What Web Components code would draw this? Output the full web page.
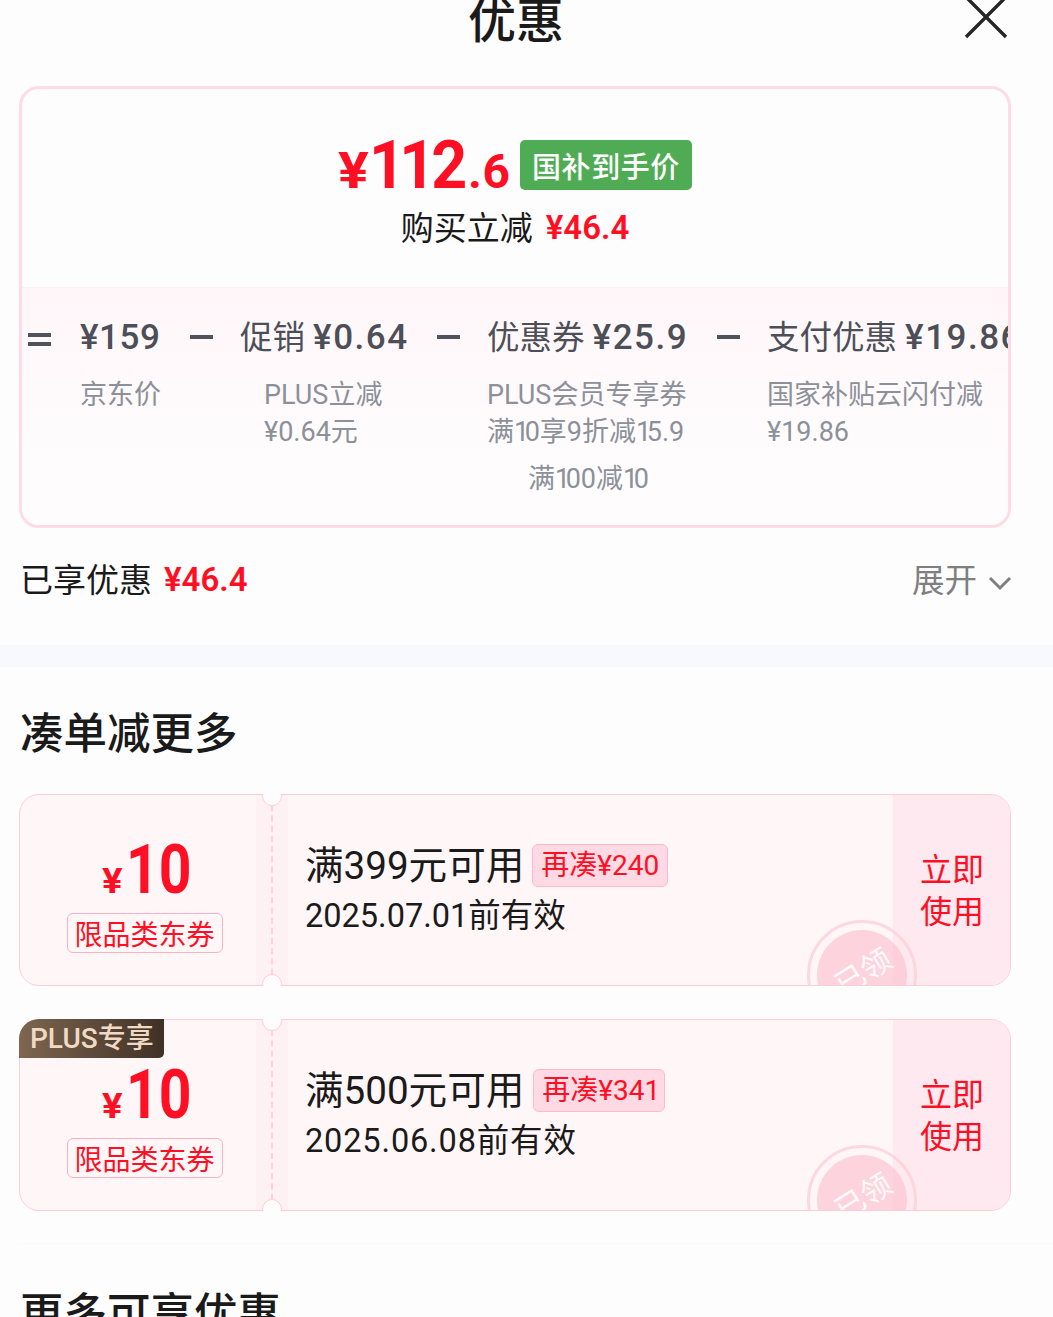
<!DOCTYPE html>
<html lang="zh"><head><meta charset="utf-8">
<style>
html,body{margin:0;padding:0;background:#fdfdfd;height:1317px;overflow:hidden}
body{font-family:"Noto Sans CJK SC",sans-serif;color:#1a1a1a;font-variant-numeric:proportional-nums}
</style></head>
<body>
<promo-sheet>
  <sheet-header>优惠</sheet-header>
  <price-card></price-card>
  <saved-row></saved-row>
  <section-band></section-band>
  <section-title>凑单减更多</section-title>
  <coupon-list>
    <coupon-ticket limit="满399元可用" gap="再凑¥240" date="2025.07.01前有效"></coupon-ticket>
    <coupon-ticket plus limit="满500元可用" gap="再凑¥341" date="2025.06.08前有效"></coupon-ticket>
  </coupon-list>
  <section-title class="more">更多可享优惠</section-title>
</promo-sheet>
<script>
const NUM='Roboto,"Noto Sans CJK SC",sans-serif';
const one='<span style="letter-spacing:-4.5px">1</span>';
function def(name,html){
  customElements.define(name,class extends HTMLElement{
    connectedCallback(){
      if(this.shadowRoot)return;
      const r=this.attachShadow({mode:'open'});
      r.innerHTML=typeof html==='function'?html(this):html;
    }
  });
}
def('promo-sheet',`<style>:host{display:block;width:1053px;height:1317px;overflow:hidden}</style><slot></slot>`);
def('sheet-header',`<style>
:host{display:block;position:relative;height:86px}
.t{display:block;text-align:center;font-size:48px;font-weight:500;line-height:48px;padding-right:21px;color:#1a1a1a;transform:translateY(-7px)}
svg{position:absolute;left:964px;top:-3px}
</style><span class="t"><slot></slot></span>
<svg width="44" height="42" viewBox="0 0 44 42" fill="none" stroke="#262626" stroke-width="3.4"><path d="M2 40 41 1M3 1l39 39"/></svg>`);
def('price-card',`<style>
:host{display:block;margin-left:19px;width:992px;height:442px;box-sizing:border-box;border:3px solid #ffdbe5;border-radius:20px;overflow:hidden;background:#fdfdfd}
.top{height:198px;display:flex;flex-direction:column;align-items:center;box-sizing:border-box;padding-top:50px}
.price{display:flex;align-items:flex-end;height:54px;color:#ff0f23;font-family:${NUM};font-weight:700;line-height:1}
.yen{font:700 50px/46px ${NUM};width:33px;margin-bottom:-1px;transform:scaleX(1.15);transform-origin:left}
.big{font-size:66px;line-height:54px;width:97px;transform:scaleX(.95);transform-origin:left;white-space:nowrap}
.dec{font-size:48px;line-height:44px;margin-bottom:-1px}
.tag{display:inline-flex;align-items:center;justify-content:center;width:172px;height:50px;background:#4fac55;color:#fff;border-radius:5px;font:500 29px/50px "Noto Sans CJK SC",sans-serif;margin-left:10px;margin-bottom:3px;letter-spacing:.6px}
.sub{margin-top:13px;font-size:33px;line-height:40px;display:flex;gap:13px;color:#1a1a1a}
.sub b{color:#ff0f23;font:600 33px/40px ${NUM};margin-top:2px}
.low{position:relative;height:238px;border-top:1px solid #fdeef3;background:linear-gradient(#fff6f9,#fefcfd 70%);box-sizing:border-box;display:grid;grid-template-columns:28px 24px 110px 50px 197px 50px 230px 50px auto;padding-left:6px;white-space:nowrap;overflow:hidden}
.tri{position:absolute;left:479px;top:-21px;width:28px;height:21px}
.op{padding-top:28px}
.c{padding-top:28px}
.h{font:400 32.5px/44px ${NUM};color:#4c4f57}
.h span{font:500 35px/44px ${NUM};letter-spacing:1.5px}
.h span.s{letter-spacing:.5px}
.d{color:#8c9099;font:400 27px/37px ${NUM};margin-top:17px}
.x{margin-top:10px}
</style>
<div class="top">
  <div class="price"><span class="yen">¥</span><span class="big">112</span><span class="dec">.6</span><span class="tag">国补到手价</span></div>
  <div class="sub"><span>购买立减</span><b>¥46.4</b></div>
</div>
<div class="low">
  <svg class="tri" viewBox="0 0 28 21" style="overflow:visible"><path d="M0 21 14 1l14 20" fill="#fbf4f6" stroke="#ffe3ea" stroke-width="2"/></svg>
  <div class="op"><svg width="23" height="44" viewBox="0 0 23 44"><path d="M0 17h23v4H0zM0 26h23v4H0z" fill="#50535b"/></svg></div><div></div>
  <div class="c"><div class="h"><span class="s">¥159</span></div><div class="d">京东价</div></div>
  <div class="op"><svg width="23" height="44" viewBox="0 0 23 44"><path d="M0 19h23v4H0z" fill="#50535b"/></svg></div>
  <div class="c"><div class="h">促销 <span>¥0.64</span></div><div class="d" style="padding-left:24px">PLUS立减<br>¥0.64元</div></div>
  <div class="op"><svg width="23" height="44" viewBox="0 0 23 44"><path d="M0 19h23v4H0z" fill="#50535b"/></svg></div>
  <div class="c"><div class="h">优惠券 <span>¥25.9</span></div><div class="d">PLUS会员专享券<br>满${one}0享9折减${one}5.9<div class="x" style="padding-left:41px">满${one}00减${one}0</div></div></div>
  <div class="op"><svg width="23" height="44" viewBox="0 0 23 44"><path d="M0 19h23v4H0z" fill="#50535b"/></svg></div>
  <div class="c"><div class="h">支付优惠 <span>¥19.86</span></div><div class="d">国家补贴云闪付减<br>¥19.86</div></div>
</div>`);
def('saved-row',`<style>
:host{display:flex;align-items:center;justify-content:space-between;height:117px;margin-left:20px;width:992px;box-sizing:border-box;padding-bottom:14px}
.l{display:flex;gap:12px;font-size:33px;line-height:40px;color:#1a1a1a}
.l span{margin-top:-2px}
.r span{margin-top:-4px}
b{color:#ff0f23;font:600 33px/40px ${NUM}}
.r{display:flex;align-items:center;gap:11px;color:#7f7f7f;font-size:32.5px;line-height:40px}
svg{margin-top:6px}
</style><div class="l"><span>已享优惠</span><b>¥46.4</b></div>
<div class="r"><span>展开</span><svg width="24" height="16" viewBox="0 0 24 16" fill="none" stroke="#7f7f7f" stroke-width="3"><path d="M2 3l10 10L22 3"/></svg></div>`);
def('section-band',`<style>:host{display:block;height:22px;background:#f8f9fc}</style>`);
def('section-title',`<style>
:host{display:block;margin:34px 0 0 20px;font-size:43.5px;font-weight:500;line-height:60px;height:93px;color:#1a1a1a;white-space:nowrap}
:host(.more){margin-top:33px;position:relative;padding-top:37px;box-shadow:0 -1px 0 #fafafa}
</style><slot></slot>`);
def('coupon-list',`<style>:host{display:flex;flex-direction:column;gap:33px;margin-left:19px;width:992px}</style><slot></slot>`);
def('coupon-ticket',el=>{
const plus=el.hasAttribute('plus');
return `<style>
:host{display:block;position:relative;height:192px;width:992px;box-sizing:border-box;font-family:"Noto Sans CJK SC",sans-serif}
.box{position:absolute;inset:0;border:1px solid #ffcdd8;border-radius:20px;overflow:hidden;display:grid;grid-template-columns:236px 32px 1fr 117px;background:#fff6f8}
.left{display:flex;flex-direction:column;align-items:center;padding-top:43px;padding-left:13px;box-sizing:border-box;color:#ff0f23}
.amt{display:flex;align-items:baseline;height:60px;font:700 68px/60px ${NUM};margin-left:1px;transform:translateY(2px)}
.amt i{font:700 35px/34px ${NUM};font-style:normal;margin-right:4px;width:20px;transform:scaleX(1.1);transform-origin:left}
.amt span{display:block;width:62px;transform:scaleX(.84);transform-origin:left}
.lab{margin-top:15px;width:156px;height:40px;box-sizing:border-box;border:1px solid #ffb0c0;border-radius:6px;font-size:28px;line-height:38px;text-align:center;white-space:nowrap}
.strip{background:#fdf1f4;position:relative}
.strip:after{content:"";position:absolute;left:15px;top:0;bottom:0;border-left:2px dashed #ffd0dc}
.mid{padding:45px 0 0 17px;position:relative}
.m1{display:flex;align-items:center;gap:8px;height:50px;font:400 38.6px/50px ${NUM};color:#1a1a1a;white-space:nowrap}
.m1 .t{margin-top:1px}
.gap{display:inline-block;height:43px;box-sizing:border-box;padding:0 8px;border:1px solid #ffb9c8;background:#ffd9e3;border-radius:6px;color:#ff0f23;font:400 28px/41px ${NUM}}
.m2{font:400 32.5px/40px ${NUM};margin-top:6px;color:#1a1a1a;white-space:nowrap;${plus?'letter-spacing:.85px':''}}
.act{background:#ffe9f0;color:#ff0f23;font-size:32px;line-height:42px;display:flex;align-items:center;padding-left:27px;box-sizing:border-box;padding-bottom:4px}
.act span{width:66px}
.stamp{position:absolute;left:787px;top:125px;width:110px;height:110px;box-sizing:border-box;border-radius:50%;border:3px solid rgba(252,205,216,.75);padding:7px;pointer-events:none}
.stamp div{width:100%;height:100%;border-radius:50%;background:rgba(251,190,205,.62);display:flex;justify-content:center;color:#fff;font-size:30px;line-height:30px}
.stamp span{display:block;transform:rotate(-32deg);margin-top:25px;height:30px;white-space:nowrap;opacity:.9}
.notch{position:absolute;width:20px;height:20px;box-sizing:border-box;border-radius:50%;background:#fdfdfd;border:1px solid #ffcdd8;left:243px}
.notch.t{top:-8px;clip-path:inset(8px -1px -1px -1px)}
.notch.b{bottom:-8px;clip-path:inset(-1px -1px 8px -1px)}
.plus{position:absolute;left:0;top:0;width:145px;height:39px;background:linear-gradient(90deg,#7e6650,#3f3026);color:#f0dac3;font:500 28px/39px ${NUM};padding-left:11px;box-sizing:border-box;border-radius:20px 0 5px 0;white-space:nowrap}
</style>
<div class="box">
  <div class="left"><div class="amt"><i>¥</i><span>10</span></div><div class="lab">限品类东券</div></div>
  <div class="strip"></div>
  <div class="mid"><div class="m1"><span class="t">${el.getAttribute('limit')}</span><span class="gap"${plus?' style="margin-left:1px"':''}>${el.getAttribute('gap').replace(/1/g,one)}</span></div><div class="m2">${el.getAttribute('date')}</div></div>
  <div class="act"><span>立即使用</span></div>
  <div class="stamp"><div><span>已领</span></div></div>
</div>
<div class="notch t"></div><div class="notch b"></div>
${plus?'<div class="plus">PLUS专享</div>':''}`;});
</script>
</body></html>
